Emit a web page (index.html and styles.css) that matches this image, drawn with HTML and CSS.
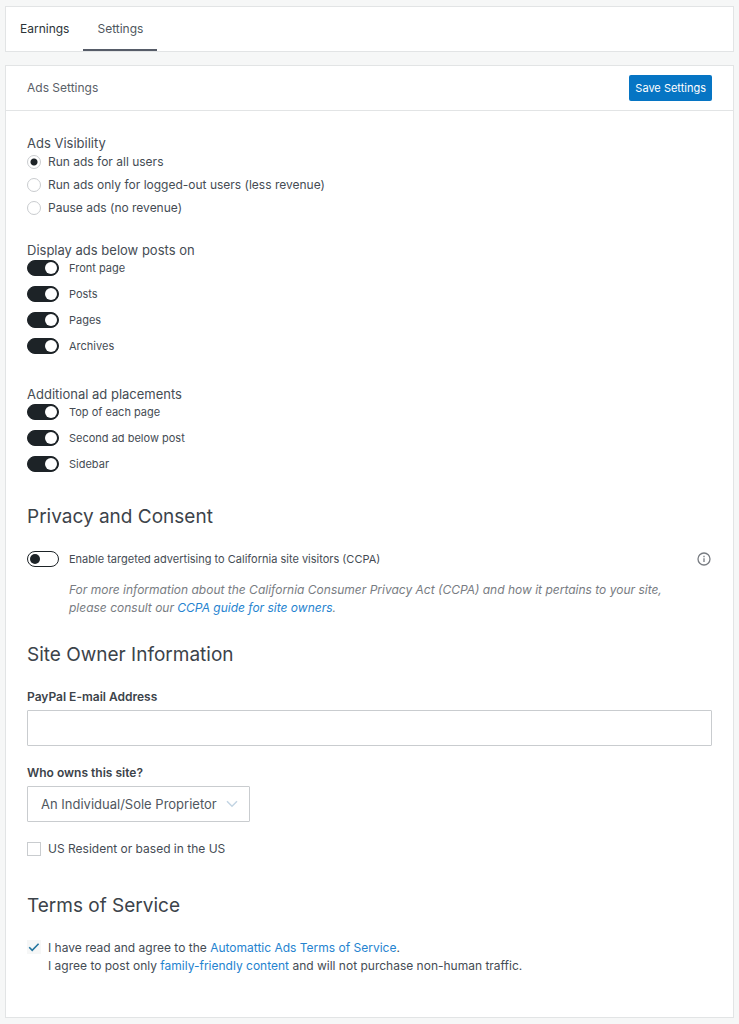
FILE: index.html
```html
<!DOCTYPE html>
<html lang="en">
<head>
<meta charset="utf-8">
<meta name="viewport" content="width=device-width, initial-scale=1">
<title>Ads Settings</title>
<link rel="stylesheet" href="styles.css">
</head>
<body>
<nav class="tabs" aria-label="Ads">
  <a class="tab" href="#earnings">Earnings</a>
  <a class="tab tab-active" href="#settings" aria-current="page">Settings</a>
</nav>
<form class="card">
  <header class="card-header">
    <h1 class="card-title">Ads Settings</h1>
    <button class="save" type="button">Save Settings</button>
  </header>
  <div class="card-body">
    <fieldset class="group">
      <legend class="legend legend-radio">Ads Visibility</legend>
      <div class="radios">
        <label class="option"><input class="radio" type="radio" name="visibility" checked>Run ads for all users</label>
        <label class="option"><input class="radio" type="radio" name="visibility">Run ads only for logged-out users (less revenue)</label>
        <label class="option"><input class="radio" type="radio" name="visibility">Pause ads (no revenue)</label>
      </div>
    </fieldset>
    <fieldset class="group group-near">
      <legend class="legend">Display ads below posts on</legend>
      <div class="toggles">
        <label class="toggle-row"><input class="toggle" type="checkbox" role="switch" checked>Front page</label>
        <label class="toggle-row"><input class="toggle" type="checkbox" role="switch" checked>Posts</label>
        <label class="toggle-row"><input class="toggle" type="checkbox" role="switch" checked>Pages</label>
        <label class="toggle-row"><input class="toggle" type="checkbox" role="switch" checked>Archives</label>
      </div>
    </fieldset>
    <fieldset class="group group-far">
      <legend class="legend">Additional ad placements</legend>
      <div class="toggles">
        <label class="toggle-row"><input class="toggle" type="checkbox" role="switch" checked>Top of each page</label>
        <label class="toggle-row"><input class="toggle" type="checkbox" role="switch" checked>Second ad below post</label>
        <label class="toggle-row"><input class="toggle" type="checkbox" role="switch" checked>Sidebar</label>
      </div>
    </fieldset>

    <section class="group-far">
      <h2 class="heading">Privacy and Consent</h2>
      <div class="consent-row">
        <label class="toggle-row"><input class="toggle" type="checkbox" role="switch">Enable targeted advertising to California site visitors (CCPA)</label>
        <button class="info" type="button" aria-label="More information">
          <svg width="16" height="16" viewBox="0 0 16 16" fill="none" stroke="currentColor" stroke-width="1.3" aria-hidden="true"><circle cx="8" cy="8" r="6"/><path d="M8 7.2v3.9M8 4.7v1.5"/></svg>
        </button>
      </div>
      <p class="note">For more information about the California Consumer Privacy Act (CCPA) and how it pertains to your site, please consult our <a class="link" href="#ccpa">CCPA guide for site owners</a>.</p>
    </section>

    <section class="group-near">
      <h2 class="heading">Site Owner Information</h2>
      <div class="field">
        <label class="field-label" for="paypal">PayPal E-mail Address</label>
        <input class="text-input" id="paypal" type="email">
      </div>
      <div class="field">
        <label class="field-label" for="owner">Who owns this site?</label>
        <div class="select-wrap">
          <select class="select" id="owner"><option>An Individual/Sole Proprietor</option></select>
          <svg class="chevron" width="12" height="8" viewBox="0 0 12 8" fill="none" stroke="currentColor" stroke-width="1.5" aria-hidden="true"><path d="M1 1.2l5 5 5-5"/></svg>
        </div>
      </div>
      <label class="option"><input class="check" type="checkbox">US Resident or based in the US</label>
    </section>

    <section class="terms">
      <h2 class="heading">Terms of Service</h2>
      <div class="agreement">
        <span class="check-wrap">
          <input class="check check-plain" id="agree" type="checkbox" checked aria-labelledby="agree-text">
          <svg class="tick" width="14" height="14" viewBox="0 0 14 14" fill="none" stroke="currentColor" stroke-width="1.6" aria-hidden="true"><path d="M2.2 7.3l3 3 6.4-6.6"/></svg>
        </span>
        <label class="agreement-text" id="agree-text" for="agree">I have read and agree to the <a class="link" href="#tos">Automattic Ads Terms of Service</a>.<br>I agree to post only <a class="link" href="#content">family-friendly content</a> and will not purchase non-human traffic.</label>
      </div>
    </section>
  </div>
</form>
</body>
</html>
```
FILE: styles.css
```css
* {
  box-sizing: border-box;
}

body {
  margin: 0;
  padding: 6px 5px;
  background: #f6f7f7;
  color: #454c54;
  font: 12px/18px Inter, "Liberation Sans", sans-serif;
}

button,
input,
select {
  margin: 0;
  font: inherit;
}

.tabs {
  display: flex;
  margin-bottom: 13px;
  background: #fff;
  border: 1px solid #e2e4e5;
}

.tab {
  padding: 13px 14px 11px;
  border-bottom: 2px solid transparent;
  color: #2c3338;
  text-decoration: none;
}

.tab-active {
  border-bottom-color: #565c68;
  color: #50575e;
}

.card {
  background: #fff;
  border: 1px solid #e2e4e5;
}

.card-header {
  display: flex;
  align-items: center;
  justify-content: space-between;
  padding: 9px 21px;
  border-bottom: 1px solid #e2e4e5;
}

.card-title {
  margin: 0;
  color: #5a6068;
  font-size: 12px;
  font-weight: 400;
}

.save {
  padding: 4px 6px;
  border: 0;
  border-radius: 2px;
  background: #0675c4;
  color: #fff;
  font-size: 11px;
}

.card-body {
  padding: 23px 21px 42px;
}

.group {
  min-width: 0;
  padding: 0;
  border: 0;
  margin: 0;
}

.group-near {
  margin-top: 24px;
}

.group-far {
  margin-top: 30px;
}

.legend {
  padding: 0;
  font-size: 13px;
}

.legend-radio {
  margin-bottom: 1px;
}

.radios {
  display: flex;
  flex-direction: column;
  gap: 5px;
}

.option {
  display: flex;
  align-items: center;
  gap: 7px;
}

.radio,
.check {
  flex: none;
  width: 14px;
  height: 14px;
  appearance: none;
  background: #fff;
  border: 1px solid #c9cccf;
}

.radio {
  border-radius: 50%;
}

.radio:checked {
  background: radial-gradient(circle, #1d2327 3px, #fff 4px);
}

.toggles {
  display: flex;
  flex-direction: column;
  gap: 8px;
}

.toggle-row {
  display: flex;
  align-items: center;
  gap: 10px;
  font-size: 11px;
}

.toggle {
  flex: none;
  display: flex;
  align-items: center;
  width: 32px;
  height: 16px;
  padding: 0 2px;
  appearance: none;
  background: #fff;
  border: 1px solid #1d2327;
  border-radius: 8px;
}

.toggle::before {
  width: 10px;
  height: 10px;
  border-radius: 50%;
  background: #1d2327;
  content: "";
}

.toggle:checked {
  justify-content: flex-end;
  padding: 0 1px;
  background: #1d2327;
}

.toggle:checked::before {
  width: 12px;
  height: 12px;
  background: #fff;
}

.heading {
  margin: 0 0 19px;
  color: #3c434a;
  font-size: 19px;
  font-weight: 400;
  line-height: 28px;
}

.consent-row {
  display: flex;
  align-items: center;
  justify-content: space-between;
}

.info {
  display: flex;
  padding: 0;
  border: 0;
  background: none;
  color: #787c82;
}

.note {
  margin: 13px 42px 0;
  color: #787c82;
  font-style: italic;
}

.link {
  color: #2583cf;
  text-decoration: none;
}

.field {
  display: flex;
  flex-direction: column;
  gap: 4px;
  margin-bottom: 18px;
}

.field-label {
  color: #3c434a;
  font-weight: 600;
}

.text-input,
.select {
  height: 36px;
  padding: 0 13px;
  background: #fff;
  border: 1px solid #c9cccf;
  border-radius: 1px;
  color: #50575e;
  font-size: 13px;
}

.select-wrap {
  position: relative;
  align-self: flex-start;
}

.select {
  padding-right: 32px;
  appearance: none;
}

.chevron {
  position: absolute;
  top: 14px;
  right: 12px;
  color: #c3d5e3;
  pointer-events: none;
}

.terms {
  margin-top: 34px;
}

.agreement {
  display: flex;
  align-items: flex-start;
  gap: 7px;
}

.check-wrap {
  position: relative;
  display: flex;
  margin-top: 1px;
}

.check-plain {
  background: #f6f7f7;
  border-color: #f6f7f7;
}

.tick {
  position: absolute;
  inset: 0;
  color: #23759f;
  pointer-events: none;
}
```
